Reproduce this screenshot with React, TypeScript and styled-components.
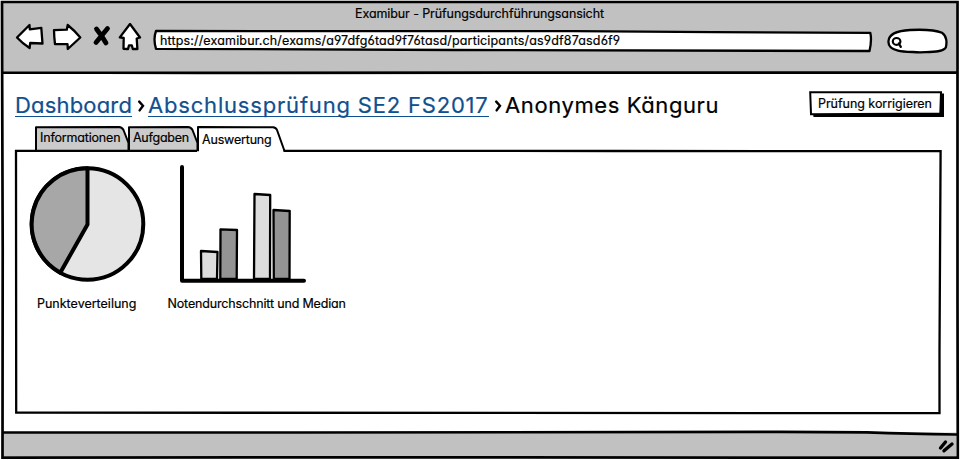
import React from "react";
import styled, { createGlobalStyle } from "styled-components";

const GlobalStyle = createGlobalStyle`
  * { box-sizing: border-box; }
  body {
    margin: 0;
    background: #fff;
    color: #000;
    font-family: Inter, sans-serif;
    font-feature-settings: "cv11", "cv03", "cv04";
  }
`;

const Frame = styled.div`
  position: relative;
  display: flex;
  flex-direction: column;
  width: 960px;
  height: 460px;
  padding: 3px 4px 4px 3px;
`;

const Overlay = styled.svg`
  position: absolute;
  inset: 0;
  width: 100%;
  height: 100%;
  overflow: visible;
  pointer-events: none;
`;

const Label = styled.span<{ $spacing?: number }>`
  position: relative;
  font-size: 12.5px;
  line-height: 16px;
  letter-spacing: ${(p) => p.$spacing ?? 0}px;
  white-space: nowrap;
  -webkit-text-stroke: 0.2px currentColor;
`;

const Header = styled.header`
  flex: 0 0 70px;
  background: #c1c1c1;
`;

const TitleBar = styled.div`
  display: flex;
  justify-content: center;
  height: 20px;
  padding: 3px 0 0 0;
`;

const Toolbar = styled.div`
  display: flex;
  padding-left: 12px;
`;

const NavIcons = styled.svg`
  flex: none;
  width: 130px;
  height: 36px;
  margin-right: 8px;
`;

const AddressField = styled.div`
  position: relative;
  display: flex;
  width: 719px;
  height: 24px;
  margin-top: 6px;
  padding: 4px 7px;
`;

const SearchField = styled.svg`
  width: 62px;
  height: 28px;
  margin: 5px 0 0 14px;
`;

const Content = styled.main`
  flex: 1;
  display: flex;
  flex-direction: column;
  padding: 18px 14px 0 12px;
  background: #fff;
`;

const Heading = styled.div`
  display: flex;
  justify-content: space-between;
  height: 35px;
`;

const Breadcrumb = styled.nav`
  display: flex;
  align-items: flex-start;
`;

const Crumb = styled.span<{ $spacing: number; $link?: boolean; $width: number }>`
  width: ${(p) => p.$width}px;
  height: 26px;
  border-bottom: ${(p) => (p.$link ? "1px solid #10508f" : "none")};
  color: ${(p) => (p.$link ? "#10508f" : "#000")};
  font-size: 22px;
  line-height: 28px;
  letter-spacing: ${(p) => p.$spacing}px;
  white-space: nowrap;
  -webkit-text-stroke: 0.2px currentColor;
`;

const Chevron = styled.svg`
  width: 16px;
  height: 26px;
`;

const ActionButton = styled.button`
  position: relative;
  display: flex;
  align-items: flex-start;
  width: 136px;
  height: 27px;
  margin: 0 -3px 0 0;
  padding: 5px 0 0 9px;
  border: 0;
  background: none;
  color: #000;
  font: inherit;
  font-feature-settings: inherit;
`;

const Tabs = styled.div`
  display: flex;
  height: 24px;
  padding-left: 20px;
`;

const TabItem = styled.div<{ $width: number; $active?: boolean }>`
  position: relative;
  display: flex;
  align-items: flex-start;
  width: ${(p) => p.$width}px;
  height: 26px;
  padding: ${(p) => (p.$active ? 6 : 4)}px 0 0 5px;
`;

const Panel = styled.section`
  position: relative;
  display: flex;
  width: 927px;
  height: 264px;
  padding: 15px 0 0 14px;
`;

const Figure = styled.figure<{ $width: number }>`
  display: flex;
  flex-direction: column;
  width: ${(p) => p.$width}px;
  margin: 0;
`;

const Chart = styled.svg`
  height: 120px;
  margin-bottom: 11px;
  overflow: visible;
`;

const Caption = styled.figcaption<{ $indent: number }>`
  display: flex;
  padding-left: ${(p) => p.$indent}px;
`;

const Footer = styled.footer`
  flex: 0 0 24px;
  display: flex;
  justify-content: flex-end;
  background: #c1c1c1;
`;

const Grip = styled.svg`
  width: 20px;
  height: 20px;
  margin-top: 3px;
`;

function Separator() {
  return (
    <Chevron viewBox="0 0 16 26">
      <path d="M7.2 10.6 L11 14.8 L7.6 19.4" fill="none" stroke="#000" strokeWidth="2.4" strokeLinecap="round" />
    </Chevron>
  );
}

function Tab({ label, width, spacing, active }: { label: string; width: number; spacing: number; active?: boolean }) {
  const shape = active
    ? `M1 25.2 V1 L76 1.2 Q79 1.5 80 4 L87.5 25`
    : `M1 24.5 V1.2 L${width - 9} .9 Q${width - 6} 1 ${width - 4.5} 4 L${width + 0.5} 17 V24.5`;
  return (
    <TabItem $width={width} $active={active}>
      <Overlay>
        <path d={shape} fill={active ? "#fff" : "#cbcbcb"} stroke="#000" strokeWidth="2" strokeLinejoin="round" />
      </Overlay>
      <Label $spacing={spacing}>{label}</Label>
    </TabItem>
  );
}

export default function App() {
  return (
    <>
      <GlobalStyle />
      <Frame>
        <Header>
          <TitleBar>
            <Label $spacing={-0.09}>Examibur - Prüfungsdurchführungsansicht</Label>
          </TitleBar>
          <Toolbar>
            <NavIcons viewBox="15 23 130 36" fill="#fff" stroke="#000" strokeWidth="2.3" strokeLinejoin="round" strokeLinecap="round">
              <path d="M17 37.5 L29.5 25 L29.8 29.4 L41.3 27.8 L42.5 43.5 L30.2 43 L29.6 48 Q22 43 17 37.5Z" />
              <path d="M54 30.2 L66.8 29.7 L67.7 25 Q74 30 80.3 37.5 L67.8 49 L67.5 44.2 L55 44.2 L54.3 37Z" />
              <path d="M96.5 29 Q102 36 106 43 M107.5 28.5 L96 42.5" strokeWidth="4.8" />
              <path d="M130 24 L140 37.5 L136.7 38.5 L137.4 49 L132.8 49 L131.8 45.4 L129 45.4 L128 49 L123.5 48.8 L123.7 38 L119.8 37.4Z" />
            </NavIcons>
            <AddressField>
              <Overlay>
                <path d="M3 2 Q0 10 3 19.8 L300 21 L716.5 22 Q719 11 717.3 3.8 L560 3.2 L420 2.2 Z" fill="#fff" stroke="#000" strokeWidth="2.3" strokeLinejoin="round" />
              </Overlay>
              <Label $spacing={0.155}>https://examibur.ch/exams/a97dfg6tad9f76tasd/participants/as9df87asd6f9</Label>
            </AddressField>
            <SearchField viewBox="886 28 62 28" fill="#fff" stroke="#000" strokeWidth="2.3" strokeLinecap="round">
              <path d="M888.5 41 C889 34 897 30.7 910 30 C925 29.3 935 29.8 942 32.8 C947 36 947 43 945.8 47.5 C943 52.5 930 51.8 920 52.3 C910 51.8 903 52 898 50.6 C891 49 888 46 888.5 41Z" />
              <ellipse cx="896.6" cy="41.4" rx="3.8" ry="3.4" strokeWidth="2.2" />
              <path d="M898.8 43.5 L900.8 46.8" />
            </SearchField>
          </Toolbar>
        </Header>
        <Content>
          <Heading>
            <Breadcrumb>
              <Crumb $link $width={117} $spacing={0.18}>Dashboard</Crumb>
              <Separator />
              <Crumb $link $width={341} $spacing={0.81}>Abschlussprüfung SE2 FS2017</Crumb>
              <Separator />
              <Crumb $width={216} $spacing={0.6}>Anonymes Känguru</Crumb>
            </Breadcrumb>
            <ActionButton>
              <Overlay>
                <path d="M4 22 H132 V2.5 H135 V26 H4.5Z" />
                <path d="M1.2 1.2 L132 1.3 L131.3 22.4 L2 23.2Z" fill="#fff" stroke="#000" strokeWidth="2" />
              </Overlay>
              <Label $spacing={-0.04}>Prüfung korrigieren</Label>
            </ActionButton>
          </Heading>
          <Tabs>
            <Tab label="Informationen" width={93} spacing={-0.18} />
            <Tab label="Aufgaben" width={69} spacing={-0.25} />
            <Tab label="Auswertung" width={88} spacing={-0.18} active />
          </Tabs>
          <Panel>
            <Overlay>
              <path d="M182 .8 H1 L1.2 262.6 L924.5 263.2 V200 L925.6 1.2 L600 1 L268.5 .8" fill="none" stroke="#000" strokeWidth="2.3" />
            </Overlay>
            <Figure $width={136}>
              <Chart viewBox="29 165 136 120" stroke="#000" strokeWidth="4">
                <circle cx="87.5" cy="224" r="55.8" fill="#e5e5e5" />
                <path d="M87.5 168.2 A55.8 55.8 0 0 0 60.26 272.7 L87.5 224.5Z" fill="#a7a7a7" strokeLinejoin="round" />
              </Chart>
              <Caption $indent={8}>
                <Label $spacing={0}>Punkteverteilung</Label>
              </Caption>
            </Figure>
            <Figure $width={190}>
              <Chart viewBox="165 165 190 120" stroke="#000" strokeWidth="2.3" strokeLinejoin="round">
                <path d="M201 251 L217.5 252 L217 279 H201.3Z" fill="#ddd" />
                <path d="M220.5 229.3 L237 230 L236.7 279 H220.3Z" fill="#949494" />
                <path d="M254.5 194 L270.2 195 L270 279 H254Z" fill="#ddd" />
                <path d="M273.5 210 L289.7 211 L289.5 279 H273.8Z" fill="#949494" />
                <path d="M182 167 V280.8 H304" fill="none" strokeWidth="4" strokeLinecap="round" />
              </Chart>
              <Caption $indent={2.5}>
                <Label $spacing={-0.16}>Notendurchschnitt und Median</Label>
              </Caption>
            </Figure>
          </Panel>
        </Content>
        <Footer>
          <Grip viewBox="936 436 20 20" stroke="#000" strokeWidth="3.4" strokeLinecap="round">
            <path d="M945.5 443 L940.5 449 M952 445 L944 451.8" fill="none" />
          </Grip>
        </Footer>
        <Overlay>
          <path d="M640 431.5 H870 L956 432.5 V434 L870 432Z" fill="#fff" />
          <path
            d="M2 2 L957.5 2 L957.5 300 L957.8 457.6 L300 457.4 L2.5 457.6 L2.7 250 L2.2 90Z M3 72.5 L200 72.8 L957 72.5 M3 432.5 L300 432.5 L780 431.9 L867 432.3 Q910 433.8 957 434.5"
            fill="none"
            stroke="#000"
            strokeWidth="2.7"
          />
        </Overlay>
      </Frame>
    </>
  );
}
